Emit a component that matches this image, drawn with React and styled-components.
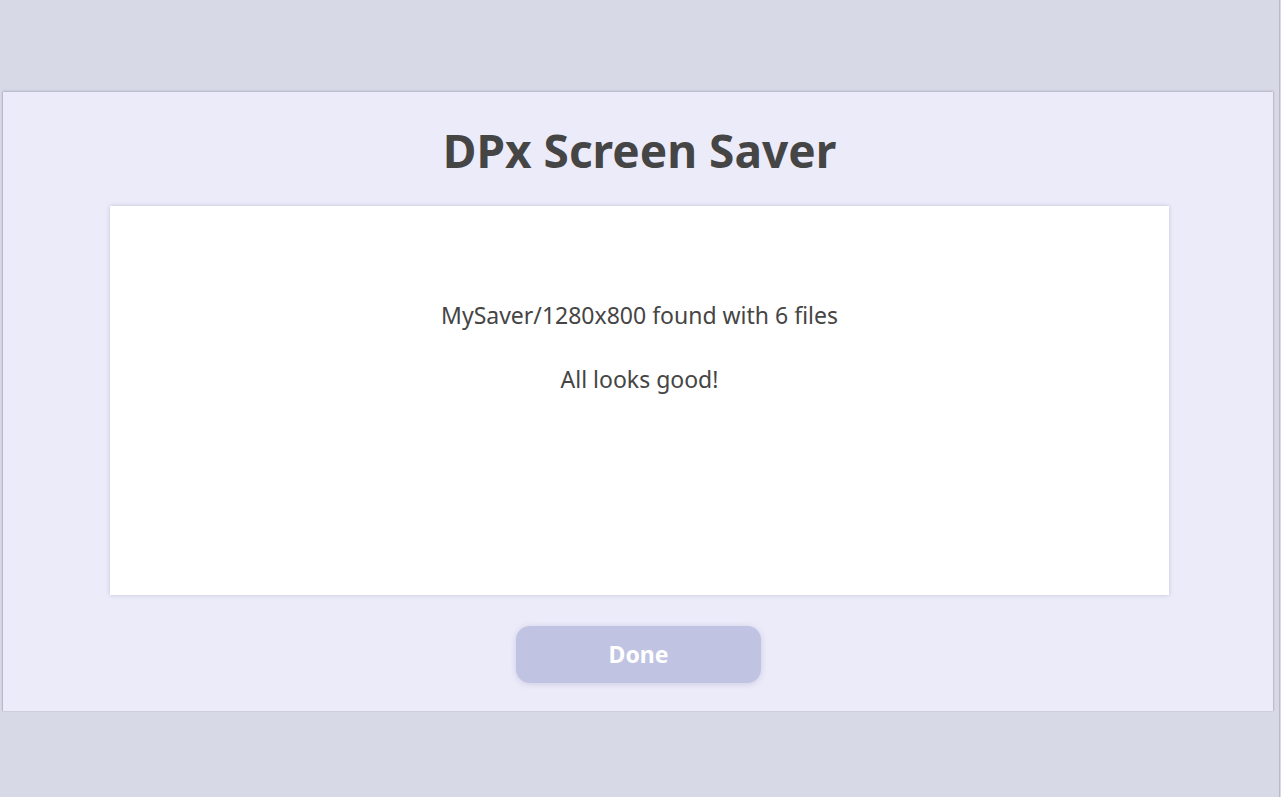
import React from 'react';
import styled, { createGlobalStyle } from 'styled-components';

const GlobalStyle = createGlobalStyle`
	html, body {
		margin: 0;
		padding: 0;
		height: 100%;
		background-color: #d8d9e6;
		font-family: "Noto Sans", "Open Sans", sans-serif;
		color: #454545;
	}
	#root {
		height: 100%;
	}
`;

const Screen = styled.div`
	height: 797px;
	width: 1280px;
	box-sizing: border-box;
	border-right: 1px solid #b9bac4;
	padding-top: 92px;
	padding-left: 3px;
	padding-right: 6px;
`;

const Panel = styled.div`
	height: 619px;
	box-sizing: border-box;
	background-color: #ecebf9;
	box-shadow: 0 -1px 2px rgba(120, 120, 150, 0.35), -1px 0 1px rgba(120, 120, 150, 0.25), 1px 0 1px rgba(120, 120, 150, 0.2);
	display: flex;
	flex-direction: column;
	align-items: center;
	padding: 0 104px 0 107px;
`;

const Title = styled.h1`
	margin: 26px 0 0;
	font-size: 46px;
	font-weight: 700;
	line-height: 64px;
	color: #454545;
`;

const Card = styled.div`
	margin-top: 24px;
	width: 100%;
	height: 389px;
	box-sizing: border-box;
	background-color: #ffffff;
	box-shadow: 0 0 4px rgba(120, 120, 160, 0.35);
	display: flex;
	flex-direction: column;
	align-items: center;
	padding-top: 94px;
`;

const Message = styled.p`
	margin: 0 0 34px;
	font-size: 23px;
	line-height: 30px;
	color: #454545;
`;

const DoneButton = styled.button`
	margin: 31px 2px 0 0;
	width: 245px;
	height: 57px;
	padding: 0 0 1px;
	border: none;
	border-radius: 14px;
	background-color: #c0c4e2;
	box-shadow: 0 1px 6px rgba(150, 150, 190, 0.35);
	color: #ffffff;
	font-family: "Noto Sans", "Open Sans", sans-serif;
	font-size: 23px;
	font-weight: 700;
	cursor: pointer;
`;

const App = () => (
	<>
		<GlobalStyle />
		<Screen>
			<Panel>
				<Title>DPx Screen Saver</Title>
				<Card>
					<Message>MySaver/1280x800 found with 6 files</Message>
					<Message>All looks good!</Message>
				</Card>
				<DoneButton>Done</DoneButton>
			</Panel>
		</Screen>
	</>
);

export default App;
